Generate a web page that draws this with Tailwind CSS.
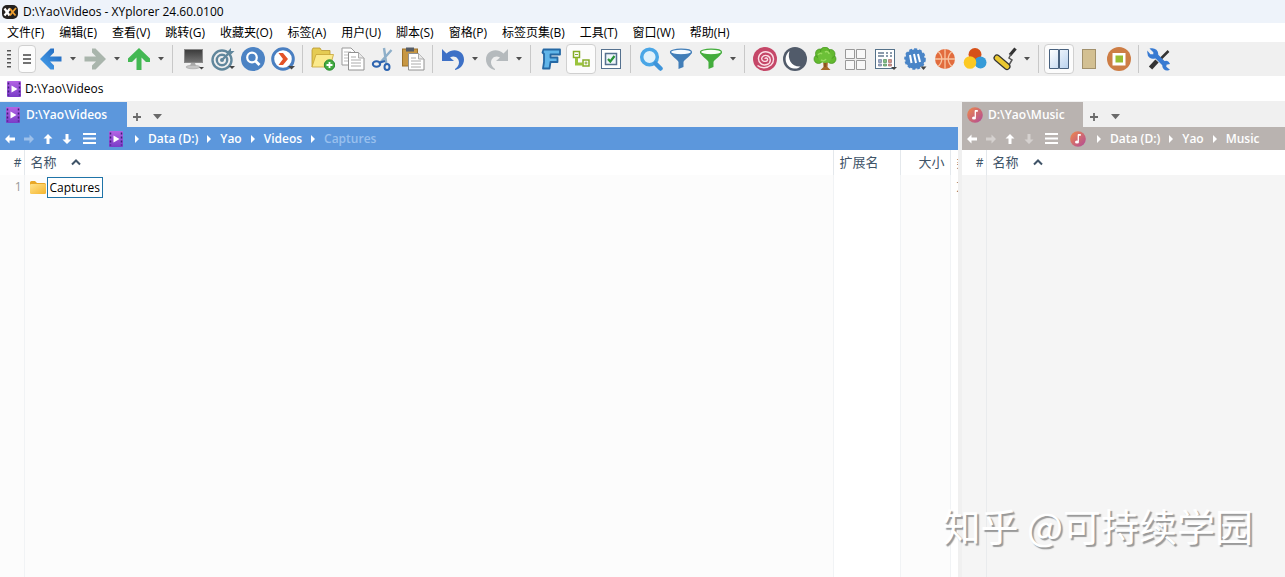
<!DOCTYPE html>
<html lang="zh-CN">
<head>
  <meta charset="UTF-8">
  <meta name="viewport" content="width=device-width, initial-scale=1.0">
  <title>D:\Yao\Videos - XYplorer 24.60.0100</title>
  <script src="https://cdn.jsdelivr.net/npm/@tailwindcss/browser@4"></script>
</head>
<body class="relative flex min-h-screen flex-col overflow-x-hidden bg-white font-['Open_Sans','Noto_Sans_CJK_SC',sans-serif] text-xs text-black">

<!-- Shared icons -->
<svg class="absolute size-0" xmlns="http://www.w3.org/2000/svg" aria-hidden="true">
  <defs>
    <linearGradient id="g-blue" x1="0" y1="1" x2="1" y2="0"><stop offset="0" stop-color="#48a4f0"/><stop offset="1" stop-color="#1e62b8"/></linearGradient>
    <linearGradient id="g-movie" x1="0" y1="0" x2="0" y2="1"><stop offset="0" stop-color="#b464e4"/><stop offset="1" stop-color="#7a3cc8"/></linearGradient>
    <linearGradient id="g-music" x1="0" y1="0" x2="1" y2="1"><stop offset="0" stop-color="#f08a4a"/><stop offset="1" stop-color="#b04a98"/></linearGradient>
    <linearGradient id="g-folder" x1="0" y1="0" x2="1" y2="1"><stop offset="0" stop-color="#ffe28a"/><stop offset="1" stop-color="#f5b52e"/></linearGradient>
    <linearGradient id="g-screen" x1="0" y1="0" x2="0" y2="1"><stop offset="0" stop-color="#3a3a3a"/><stop offset="1" stop-color="#757575"/></linearGradient>
    <linearGradient id="g-pane" x1="0" y1="0" x2="1" y2="1"><stop offset="0" stop-color="#ffffff"/><stop offset="1" stop-color="#b9d2ef"/></linearGradient>
  </defs>
  <symbol id="drop" viewBox="0 0 6 4"><path d="M0 0h6L3 3.500z" fill="currentColor"/></symbol>
  <symbol id="movie" viewBox="0 0 14 16">
    <rect width="14" height="16" rx="1" fill="url(#g-movie)"/>
    <path d="M1.500 1.500v13M12.500 1.500v13" stroke="#3f1c78" stroke-width="1.500" stroke-dasharray="2 2"/>
    <path d="M4.500 4.500l6 3.500-6 3.500z" fill="#fff"/>
  </symbol>
  <symbol id="music" viewBox="0 0 16 16">
    <circle cx="8" cy="8" r="7.800" fill="url(#g-music)"/>
    <path d="M8.300 3.500v7" stroke="#fff" stroke-width="1.300"/><path d="M8 3h2.800v1.800H8z" fill="#fff"/><ellipse cx="7" cy="11" rx="2" ry="1.600" fill="#fff"/>
  </symbol>
  <symbol id="nav-arrow" viewBox="0 0 10 10"><path d="M0 5l4.500-4.500v3H10v3H4.500v3z" fill="currentColor"/></symbol>
  <symbol id="crumb" viewBox="0 0 4 8"><path d="M0 0l4 4-4 4z" fill="currentColor"/></symbol>
  <symbol id="lines" viewBox="0 0 13 11"><path d="M0 1h13M0 5.500h13M0 10h13" stroke="currentColor" stroke-width="2"/></symbol>
  <symbol id="plus" viewBox="0 0 8 8"><path d="M4 0v8M0 4h8" stroke="currentColor" stroke-width="1.800"/></symbol>
  <symbol id="sort" viewBox="0 0 10 7"><path d="M1 5.500l4-4 4 4" fill="none" stroke="currentColor" stroke-width="2"/></symbol>
</svg>

<!-- Title bar -->
<header class="flex h-[23px] items-center gap-[5px] bg-[#eef3fa] pl-[2px]">
  <svg class="size-4" viewBox="0 0 16 16"><rect y="1" width="16" height="14" rx="5" fill="#24211f"/><path d="M2.500 4.500l5 7M8 4.500l-5.500 7" stroke="#fff" stroke-width="2.200"/><path d="M8 4.500l2.500 3.500 3.500-4M10.500 8L8 11.500M10.500 8l3 3.500" fill="none" stroke="#f0a030" stroke-width="1.800"/></svg>
  <h1>D:\Yao\Videos - XYplorer 24.60.0100</h1>
</header>

<!-- Menu -->
<nav class="flex h-[19px] items-center gap-[15px] bg-white pl-[7px] whitespace-nowrap">
  <button type="button">文件(F)</button>
  <button type="button">编辑(E)</button>
  <button type="button">查看(V)</button>
  <button type="button">跳转(G)</button>
  <button type="button">收藏夹(O)</button>
  <button type="button">标签(A)</button>
  <button type="button">用户(U)</button>
  <button type="button">脚本(S)</button>
  <button type="button">窗格(P)</button>
  <button type="button">标签页集(B)</button>
  <button type="button">工具(T)</button>
  <button type="button">窗口(W)</button>
  <button type="button">帮助(H)</button>
</nav>

<!-- Toolbar -->
<div role="toolbar" aria-label="工具栏" class="flex h-[34px] shrink-0 items-center bg-[#f0f0f0] text-[#505050] *:shrink-0">
  <svg class="h-5 w-[18px]" viewBox="0 0 18 20"><path d="M9 1v19" stroke="#555" stroke-width="4" stroke-dasharray="1.500 2.500"/></svg>
  <button type="button" aria-label="菜单" class="grid h-7 w-[18px] place-items-center rounded-sm border border-[#d0d0d0] bg-[#fcfcfc]"><svg class="h-3 w-2" viewBox="0 0 8 12"><path d="M0 2h8M0 6h8M0 10h8" stroke="#444" stroke-width="1.300"/></svg></button>
  <button type="button" aria-label="后退" class="grid w-[30px] place-items-center"><svg class="size-6" viewBox="0 0 24 24"><path d="M1 12L11.500 1.500H15V5.500L11 9.500H22.500V14.500H11L15 18.500V22.500H11.500z" fill="url(#g-blue)"/></svg></button>
  <button type="button" aria-label="后退列表" class="grid w-[14px] place-items-center"><svg class="h-1 w-[6px]"><use href="#drop"/></svg></button>
  <button type="button" aria-label="前进" class="grid w-[30px] place-items-center"><svg class="size-6" viewBox="0 0 24 24"><path d="M23 12L12.500 1.500H9V5.500L13 9.500H1.500V14.500H13L9 18.500V22.500H12.500z" fill="#a9b5ac"/></svg></button>
  <button type="button" aria-label="前进列表" class="grid w-[14px] place-items-center"><svg class="h-1 w-[6px]"><use href="#drop"/></svg></button>
  <button type="button" aria-label="向上" class="grid w-[30px] place-items-center"><svg class="size-6" viewBox="0 0 24 24"><path d="M12 1L23 11.500V15H19L14.500 10.500V23H9.500V10.500L5 15H1V11.500z" fill="#43b853"/></svg></button>
  <button type="button" aria-label="向上列表" class="grid w-[14px] place-items-center"><svg class="h-1 w-[6px]"><use href="#drop"/></svg></button>
  <span class="mr-[5px] ml-1 h-7 w-px bg-[#c8c8c8]"></span>
  <button type="button" aria-label="驱动器" class="grid w-[30px] place-items-center"><svg class="size-6" viewBox="0 0 24 24"><rect x="3.500" y="2.500" width="18" height="13" fill="url(#g-screen)" stroke="#8a8a8a"/><path d="M10 16h4l1 3H9z" fill="#aaa"/><ellipse cx="12" cy="20" rx="7" ry="1.800" fill="#c5c5c5" stroke="#999" stroke-width=".5"/><path d="M18 20h5l-2.500 2.500z" fill="#444"/></svg></button>
  <button type="button" aria-label="定位" class="grid w-[30px] place-items-center"><svg class="size-6" viewBox="0 0 24 24"><g fill="none" stroke="#61879c" stroke-width="2.400"><circle cx="11" cy="13" r="9.500"/><circle cx="11" cy="13" r="5.200"/><path d="M11 13l9-9"/></g><circle cx="11" cy="13" r="2" fill="#61879c"/><path d="M16.500 4.500L20 1v3h3.500L20 7.500h-3.500z" fill="#61879c"/><path d="M18 19h6l-3 3z" fill="#444"/></svg></button>
  <button type="button" aria-label="搜索" class="grid w-[30px] place-items-center"><svg class="size-6" viewBox="0 0 24 24"><circle cx="12" cy="12" r="12" fill="#4c83c4"/><circle cx="11" cy="10.500" r="4.800" fill="none" stroke="#fff" stroke-width="2.200"/><path d="M14.500 14l4 4" stroke="#fff" stroke-width="2.800"/></svg></button>
  <button type="button" aria-label="转到" class="grid w-[30px] place-items-center"><svg class="size-6" viewBox="0 0 24 24"><circle cx="12" cy="12" r="10.300" fill="#fff" stroke="#4a7fc1" stroke-width="3"/><path d="M7.500 6h4.500l5 6-5 6H7.500l4.500-6z" fill="#e35227"/><path d="M17 19h7l-3.500 3.500z" fill="#444"/></svg></button>
  <span class="mr-[5px] ml-1 h-7 w-px bg-[#c8c8c8]"></span>
  <button type="button" aria-label="新建文件夹" class="grid w-[30px] place-items-center"><svg class="size-6" viewBox="0 0 24 24"><path d="M1 20V3l1-2h7l1.500 2.500H19V8" fill="#e5cb52" stroke="#b8962e" stroke-width=".8"/><path d="M1 20L5 7.500h17.500L19 20z" fill="#fbea8c" stroke="#c7a233" stroke-width=".8"/><circle cx="18.500" cy="18" r="5.200" fill="#43ab41" stroke="#268a30"/><path d="M18.500 15v6M15.500 18h6" stroke="#fff" stroke-width="1.800"/></svg></button>
  <button type="button" aria-label="复制" class="grid w-[30px] place-items-center"><svg class="size-6" viewBox="0 0 24 24"><path d="M1 1h9l4 4v13H1z" fill="#fff" stroke="#999"/><path d="M3 5h7M3 8h8M3 11h8M3 14h8" stroke="#bbb"/><path d="M7.500 5.500h10L23 11v12H7.500z" fill="#fff" stroke="#909090"/><path d="M17.500 5.500V11H23" fill="#e8e8e8" stroke="#aaa"/><path d="M10 10h5M10 13h10M10 16h10M10 19h10" stroke="#aaa"/></svg></button>
  <button type="button" aria-label="剪切" class="grid w-[30px] place-items-center"><svg class="size-6" viewBox="0 0 24 24"><path d="M20.500 3L8 17M13 1l2.500 17" stroke="#8eafc9" stroke-width="2.400"/><g fill="none" stroke="#2d64b0" stroke-width="2"><ellipse cx="5.500" cy="17" rx="3.700" ry="2.800"/><ellipse cx="16" cy="20" rx="2.500" ry="3"/><path d="M9 15.500l5-1.500"/></g></svg></button>
  <button type="button" aria-label="粘贴" class="grid w-[30px] place-items-center"><svg class="size-6" viewBox="0 0 24 24"><rect x="1.500" y="2" width="15" height="17" fill="#c79743" stroke="#9b712a"/><rect x="5" y=".5" width="8" height="4" fill="#555d68"/><path d="M7.500 6.500h10L23 12v11H7.500z" fill="#fff" stroke="#909090"/><path d="M17.500 6.500V12H23" fill="#e8e8e8" stroke="#aaa"/><path d="M10 11h5M10 14h10M10 17h10M10 20h10" stroke="#aaa"/></svg></button>
  <span class="mr-[5px] ml-1 h-7 w-px bg-[#c8c8c8]"></span>
  <button type="button" aria-label="撤销" class="grid w-[30px] place-items-center"><svg class="size-6" viewBox="0 0 24 24"><path d="M1 2v12h12L9 10.500c5-3 9 1 9 5 0 3-2 5-4 6.500v1c5-1 9-5 9-10.500C23 4 13 0 5.500 6.500z" fill="#3d70c6"/></svg></button>
  <button type="button" aria-label="撤销列表" class="grid w-[14px] place-items-center"><svg class="h-1 w-[6px]"><use href="#drop"/></svg></button>
  <button type="button" aria-label="重做" class="grid w-[30px] place-items-center"><svg class="size-6" viewBox="0 0 24 24"><path d="M23 2v12H11l4-3.500c-5-3-9 1-9 5 0 3 2 5 4 6.500v1C5 22 1 18 1 12.500 1 4 11 0 18.500 6.500z" fill="#b5babd"/></svg></button>
  <button type="button" aria-label="重做列表" class="grid w-[14px] place-items-center"><svg class="h-1 w-[6px]"><use href="#drop"/></svg></button>
  <span class="mr-[5px] ml-1 h-7 w-px bg-[#c8c8c8]"></span>
  <button type="button" aria-label="查找文件" class="grid w-[30px] place-items-center"><svg class="size-6" viewBox="0 0 24 24"><path d="M4.500 2.500H21V7.500h-9.500v3h7v4.500h-7l-1 6.500H4l1-6.500V7L3.500 5.500z" fill="#61b5e9" stroke="#2568a4" stroke-width="1.800" stroke-linejoin="round"/></svg></button>
  <button type="button" aria-label="树" aria-pressed="true" class="grid h-[30px] w-[30px] place-items-center rounded-sm border border-[#d0d0d0] bg-[#fcfcfc]"><svg class="size-6" viewBox="0 0 24 24"><g fill="none" stroke="#86ad28" stroke-width="1.500"><rect x="4.500" y="4.500" width="6" height="6"/><rect x="14" y="13" width="6" height="6"/></g><path d="M7.500 11v6H14" fill="none" stroke="#9ac33c" stroke-width="3"/><path d="M6 7.500h3M15.500 16h3M17 14.500v3" stroke="#86ad28"/></svg></button>
  <button type="button" aria-label="复选框" class="grid w-[30px] place-items-center"><svg class="size-6" viewBox="0 0 24 24"><rect x="2.500" y="2.500" width="19" height="19" fill="#fff" stroke="#55718f"/><rect x="6.500" y="6.500" width="11" height="11" fill="#eef5fa" stroke="#55718f" stroke-width="1.500"/><path d="M9 12l2.300 2.500L15.500 9" fill="none" stroke="#299339" stroke-width="2.200"/></svg></button>
  <span class="mr-[5px] ml-1 h-7 w-px bg-[#c8c8c8]"></span>
  <button type="button" aria-label="快速搜索" class="grid w-[30px] place-items-center"><svg class="size-6" viewBox="0 0 24 24"><circle cx="10.500" cy="10" r="7.800" fill="#e0f1fb" stroke="#4aa6e6" stroke-width="3.500"/><path d="M16.500 16.500l5 5" stroke="#3e94da" stroke-width="4.500" stroke-linecap="round"/></svg></button>
  <button type="button" aria-label="过滤器" class="grid w-[30px] place-items-center"><svg class="size-6" viewBox="0 0 24 24"><path d="M1 5c0 3 8 8 8.500 10v7l5-2v-5C15 13 23 8 23 5z" fill="#427eb8"/><ellipse cx="12" cy="5" rx="10.500" ry="2.800" fill="#f7fbff" stroke="#427eb8" stroke-width="1.200"/></svg></button>
  <button type="button" aria-label="视觉过滤器" class="grid w-[30px] place-items-center"><svg class="size-6" viewBox="0 0 24 24"><path d="M1 5c0 3 8 8 8.500 10v7l5-2v-5C15 13 23 8 23 5z" fill="#43ad3c"/><ellipse cx="12" cy="5" rx="10.500" ry="2.800" fill="#f8fff7" stroke="#43ad3c" stroke-width="1.200"/></svg></button>
  <button type="button" aria-label="过滤器列表" class="grid w-[14px] place-items-center"><svg class="h-1 w-[6px]"><use href="#drop"/></svg></button>
  <span class="mr-[5px] ml-1 h-7 w-px bg-[#c8c8c8]"></span>
  <button type="button" aria-label="螺旋" class="grid w-[30px] place-items-center"><svg class="size-6" viewBox="0 0 24 24"><circle cx="12" cy="12" r="12" fill="#c54768"/><path d="M12 12c0-2 3-1 2.500 1S9 15 8.700 12 12 7.500 15 9s3.500 7-1 8.500-9-1.500-8.500-6.500S11 3.500 16 5.500s6 9 2 12.500-10 3.500-13.500.500" fill="none" stroke="#fbdfe6" stroke-width="1.400"/></svg></button>
  <button type="button" aria-label="夜间模式" class="grid w-[30px] place-items-center"><svg class="size-6" viewBox="0 0 24 24"><circle cx="12" cy="12" r="12" fill="#515b6a"/><path d="M6.500 4C0 9 2 20.500 11 21.500c3 .3 5-.5 6.500-2C8.500 20 4 12 6.500 4z" fill="#fff"/></svg></button>
  <button type="button" aria-label="迷你树" class="grid w-[30px] place-items-center"><svg class="size-6" viewBox="0 0 24 24"><path d="M10 13l.5 7-3 3h10l-3-3 .5-7z" fill="#a56728"/><g fill="#63b92f" stroke="#439220" stroke-width=".7"><circle cx="5.500" cy="12" r="4.500"/><circle cx="18.500" cy="12" r="4.500"/><circle cx="7" cy="6.500" r="4.500"/><circle cx="17.500" cy="7" r="4.500"/><circle cx="12" cy="4.500" r="4.500"/></g><ellipse cx="12" cy="10" rx="7" ry="6" fill="#6cc038"/><path d="M5 8c1-2 3-2 4-1M12 5c2-1 4 0 4 2M8 13c2 1 4 1 5-1" fill="none" stroke="#99da60" stroke-width="1.500"/><path d="M12 20v-4" stroke="#70421a"/></svg></button>
  <button type="button" aria-label="缩略图" class="grid w-[30px] place-items-center"><svg class="size-6" viewBox="0 0 24 24"><path d="M2.500 2.500h9v9h-9zM13.500 2.500h9v9h-9zM2.500 13.500h9v9h-9zM13.500 13.500h9v9h-9z" fill="#f8f8f8" stroke="#999"/></svg></button>
  <button type="button" aria-label="详细信息" class="grid w-[30px] place-items-center"><svg class="size-6" viewBox="0 0 24 24"><rect x="2.500" y="2.500" width="19" height="19" fill="#fff" stroke="#55728a"/><path d="M5 6h6M5 9h6M13 6h2M17 6h2M13 9h2M17 9h2" stroke="#667b91" stroke-width="1.500"/><path d="M5.500 12.500h3v3h-3zM5.500 17h3v2h-3z" fill="#9aa9c9" stroke="#7d8aa5" stroke-width=".8"/><path d="M10.500 12.500h3v3h-3zM10.500 17h3v2h-3z" fill="#82c181" stroke="#62976e" stroke-width=".8"/><path d="M15.500 12.500h3v3h-3zM15.500 17h3v2h-3z" fill="#d99083" stroke="#a87a78" stroke-width=".8"/><path d="M18 20h6l-3 3z" fill="#444"/></svg></button>
  <button type="button" aria-label="标记" class="grid w-[30px] place-items-center"><svg class="size-6" viewBox="0 0 24 24"><circle cx="12" cy="12" r="9.800" fill="#4a85c7" stroke="#4a85c7" stroke-width="2" stroke-dasharray="3 2"/><path d="M7 8l1.500 8M11 7l2 9M15 7l2 8" stroke="#fff" stroke-width="2"/><path d="M17.500 19.500h6L20.500 23z" fill="#444"/></svg></button>
  <button type="button" aria-label="篮球" class="grid w-[30px] place-items-center"><svg class="size-6" viewBox="0 0 24 24"><circle cx="12" cy="12" r="10" fill="#e26c3d"/><path d="M12 2v20M2 12h20M5 4.500c5 4 5 11 0 15M19 4.500c-5 4-5 11 0 15" fill="none" stroke="#f8c4a0" stroke-width="1.300"/></svg></button>
  <button type="button" aria-label="颜色过滤器" class="grid w-[30px] place-items-center"><svg class="size-6" viewBox="0 0 24 24"><circle cx="12" cy="7.500" r="6.500" fill="#d65119"/><circle cx="17.500" cy="15.500" r="6" fill="#369bd8"/><circle cx="7" cy="15.500" r="6.300" fill="#fcc923"/></svg></button>
  <button type="button" aria-label="样式" class="grid w-[30px] place-items-center"><svg class="size-6" viewBox="0 0 24 24"><path d="M22.500 1.500L17 8" stroke="#333" stroke-width="3.200"/><path d="M18 7l-2 4 3 2-3 5" fill="none" stroke="#555" stroke-width="1.500"/><path d="M4 11l10 8.500" stroke="#333" stroke-width="7" stroke-linecap="round"/><path d="M4 11l10 8.500" stroke="#eac831" stroke-width="4.600" stroke-linecap="round"/></svg></button>
  <button type="button" aria-label="样式列表" class="grid w-[14px] place-items-center"><svg class="h-1 w-[6px]"><use href="#drop"/></svg></button>
  <span class="mr-[5px] ml-1 h-7 w-px bg-[#c8c8c8]"></span>
  <button type="button" aria-label="双窗格" aria-pressed="true" class="grid h-[30px] w-[30px] place-items-center rounded-sm border border-[#d0d0d0] bg-[#fcfcfc]"><svg class="size-6" viewBox="0 0 24 24"><path d="M2.500 2.500h9v19h-9zM12.500 2.500h9v19h-9z" fill="url(#g-pane)" stroke="#48617e"/></svg></button>
  <button type="button" aria-label="预览" class="grid w-[30px] place-items-center"><svg class="size-6" viewBox="0 0 24 24"><rect x="5.500" y="2.500" width="13" height="19" fill="#d3c092" stroke="#a2916c"/></svg></button>
  <button type="button" aria-label="悬浮框" class="grid w-[30px] place-items-center"><svg class="size-6" viewBox="0 0 24 24"><circle cx="12" cy="12" r="12" fill="#cd7d45"/><rect x="5.500" y="6" width="13" height="12.500" fill="#fff"/><rect x="8.500" y="8.500" width="7.500" height="7" fill="#98bd33"/></svg></button>
  <span class="mr-[5px] ml-1 h-7 w-px bg-[#c8c8c8]"></span>
  <button type="button" aria-label="配置" class="grid w-[30px] place-items-center"><svg class="size-6" viewBox="0 0 24 24"><path d="M21.500 4l-9 9" stroke="#333" stroke-width="2.500"/><path d="M10 14l-6.500 7" stroke="#333" stroke-width="4.500"/><path d="M4 2l3 3v3H3L1 5.500C1 10 4 12 8.500 10.500L16 18c-.5 3 2 5.500 5.500 4.500L18.500 20l.5-3 3-.5c-1-2-3-2.500-4.500-1.500L10.500 8C11 4 8 1.500 4 2z" fill="#397bd2" stroke="#397bd2" stroke-width="1.400"/></svg></button>
</div>

<!-- Address bar -->
<label class="flex h-[25px] items-center gap-1 bg-white pl-[7px]">
  <svg class="h-4 w-[14px]"><use href="#movie"/></svg>
  <input type="text" aria-label="地址栏" value="D:\Yao\Videos" class="h-5 flex-1 outline-none">
</label>

<!-- Panes -->
<main class="grid flex-1 grid-cols-[958fr_323fr] gap-1 bg-[#f0f0f0]">
  <section class="flex min-w-0 flex-col">
    <div class="flex h-[26px] items-end text-[#6a6a6a]">
      <button type="button" class="flex h-[25px] w-[127px] items-center gap-[6px] bg-[#5c97dc] pl-[6px] font-semibold text-white"><svg class="h-4 w-[14px]"><use href="#movie"/></svg>D:\Yao\Videos</button>
      <button type="button" aria-label="新标签页" class="grid h-5 w-5 place-items-center"><svg class="size-2"><use href="#plus"/></svg></button>
      <button type="button" aria-label="标签页列表" class="grid h-5 w-5 place-items-center"><svg class="h-[6px] w-[9px]"><use href="#drop"/></svg></button>
    </div>
    <nav class="flex h-[23px] items-center bg-[#5c97dc] pl-[5px] font-semibold text-white">
      <button type="button" aria-label="后退" class="mr-[9px]"><svg class="size-[10px]"><use href="#nav-arrow"/></svg></button>
      <button type="button" aria-label="前进" class="mr-[9px] text-white/40"><svg class="size-[10px] rotate-180"><use href="#nav-arrow"/></svg></button>
      <button type="button" aria-label="向上" class="mr-[9px]"><svg class="size-[10px] rotate-90"><use href="#nav-arrow"/></svg></button>
      <button type="button" aria-label="向下" class="mr-[11px]"><svg class="size-[10px] -rotate-90"><use href="#nav-arrow"/></svg></button>
      <button type="button" aria-label="菜单" class="mr-[13px]"><svg class="h-[11px] w-[13px]"><use href="#lines"/></svg></button>
      <svg class="mr-3 h-4 w-[14px]"><use href="#movie"/></svg>
      <ol class="flex items-center gap-[9px]">
        <li class="flex items-center gap-[9px]"><svg class="h-2 w-1"><use href="#crumb"/></svg><a href="#">Data (D:)</a></li>
        <li class="flex items-center gap-[9px]"><svg class="h-2 w-1"><use href="#crumb"/></svg><a href="#">Yao</a></li>
        <li class="flex items-center gap-[9px]"><svg class="h-2 w-1"><use href="#crumb"/></svg><a href="#">Videos</a></li>
        <li class="flex items-center gap-[9px]"><svg class="h-2 w-1"><use href="#crumb"/></svg><a href="#" class="text-[#99c0ee]">Captures</a></li>
      </ol>
    </nav>
    <table class="w-full flex-1 table-fixed bg-white text-left">
      <colgroup><col class="w-6"><col><col class="w-[67px]"><col class="w-[50px]"><col class="w-2"></colgroup>
      <thead>
        <tr class="h-[25px] text-[13px] text-[#405468] *:border-r *:border-[#e4e8ec] *:p-0 *:font-normal">
          <th class="text-right text-xs"><span class="pr-[2px]">#</span></th>
          <th><span class="flex items-center gap-[14px] pl-[6px]">名称 <svg class="h-[7px] w-[10px]"><use href="#sort"/></svg></span></th>
          <th><span class="pl-[6px]">扩展名</span></th>
          <th class="text-right"><span class="pr-[5px]">大小</span></th>
          <th class="overflow-hidden border-r-0! whitespace-nowrap"><span class="pl-[6px]">类</span></th>
        </tr>
      </thead>
      <tbody class="bg-[#fcfcfc]">
        <tr class="h-6 *:border-r *:border-[#f1f3f5] *:p-0">
          <td class="text-right text-[#999]"><span class="pr-[2px]">1</span></td>
          <td><span class="flex items-center gap-px pl-[5px]">
            <svg class="h-[13px] w-4" viewBox="0 0 16 13"><path d="M0 1.500Q0 0 1.500 0H5l2 2h7.500Q16 2 16 3.500V6H0z" fill="#e9a827"/><rect y="3" width="16" height="10" rx="1.200" fill="url(#g-folder)"/></svg>
            <input type="text" aria-label="名称" value="Captures" class="h-[21px] w-14 border border-[#1f74a8] bg-white pl-[2px] outline-none">
          </span></td>
          <td class="bg-white"></td>
          <td></td>
          <td class="overflow-hidden border-r-0! bg-white whitespace-nowrap text-[#555]"><span class="pl-[6px]">文</span></td>
        </tr>
        <tr class="*:border-r *:border-[#f1f3f5]"><td></td><td></td><td class="bg-white"></td><td></td><td class="border-r-0! bg-white"></td></tr>
      </tbody>
    </table>
  </section>

  <section class="flex min-w-0 flex-col">
    <div class="flex h-[26px] items-end text-[#6a6a6a]">
      <button type="button" class="flex h-[25px] w-[121px] items-center gap-[5px] bg-[#b9b3b0] pl-[5px] font-semibold text-white"><svg class="size-4"><use href="#music"/></svg>D:\Yao\Music</button>
      <button type="button" aria-label="新标签页" class="grid h-5 w-[22px] place-items-center"><svg class="size-2"><use href="#plus"/></svg></button>
      <button type="button" aria-label="标签页列表" class="grid h-5 w-5 place-items-center"><svg class="h-[6px] w-[9px]"><use href="#drop"/></svg></button>
    </div>
    <nav class="flex h-[23px] items-center bg-[#b9b3b0] pl-[5px] font-semibold whitespace-nowrap text-white">
      <button type="button" aria-label="后退" class="mr-[9px]"><svg class="size-[10px]"><use href="#nav-arrow"/></svg></button>
      <button type="button" aria-label="前进" class="mr-[9px] text-white/40"><svg class="size-[10px] rotate-180"><use href="#nav-arrow"/></svg></button>
      <button type="button" aria-label="向上" class="mr-[9px]"><svg class="size-[10px] rotate-90"><use href="#nav-arrow"/></svg></button>
      <button type="button" aria-label="向下" class="mr-[11px] text-white/40"><svg class="size-[10px] -rotate-90"><use href="#nav-arrow"/></svg></button>
      <button type="button" aria-label="菜单" class="mr-3"><svg class="h-[11px] w-[13px]"><use href="#lines"/></svg></button>
      <svg class="mr-[11px] size-4"><use href="#music"/></svg>
      <ol class="flex items-center gap-[9px]">
        <li class="flex items-center gap-[9px]"><svg class="h-2 w-1"><use href="#crumb"/></svg><a href="#">Data (D:)</a></li>
        <li class="flex items-center gap-[9px]"><svg class="h-2 w-1"><use href="#crumb"/></svg><a href="#">Yao</a></li>
        <li class="flex items-center gap-[9px]"><svg class="h-2 w-1"><use href="#crumb"/></svg><a href="#">Music</a></li>
      </ol>
    </nav>
    <table class="w-full flex-1 table-fixed bg-white text-left">
      <colgroup><col class="w-6"><col></colgroup>
      <thead>
        <tr class="h-[25px] text-[13px] text-[#405468] *:p-0 *:font-normal">
          <th class="border-r border-[#e4e8ec] text-right text-xs"><span class="pr-[2px]">#</span></th>
          <th><span class="flex items-center gap-[14px] pl-[6px]">名称 <svg class="h-[7px] w-[10px]"><use href="#sort"/></svg></span></th>
        </tr>
      </thead>
      <tbody class="bg-[#f5f5f5]">
        <tr><td class="border-r border-[#e9ebed]"></td><td></td></tr>
      </tbody>
    </table>
  </section>
</main>

<p class="pointer-events-none absolute right-8 bottom-6 font-['Noto_Sans_CJK_SC',sans-serif] text-[38px] leading-[56px] whitespace-nowrap text-white [text-shadow:2px_2px_1px_#999]">知乎 @可持续学园</p>

</body>
</html>
